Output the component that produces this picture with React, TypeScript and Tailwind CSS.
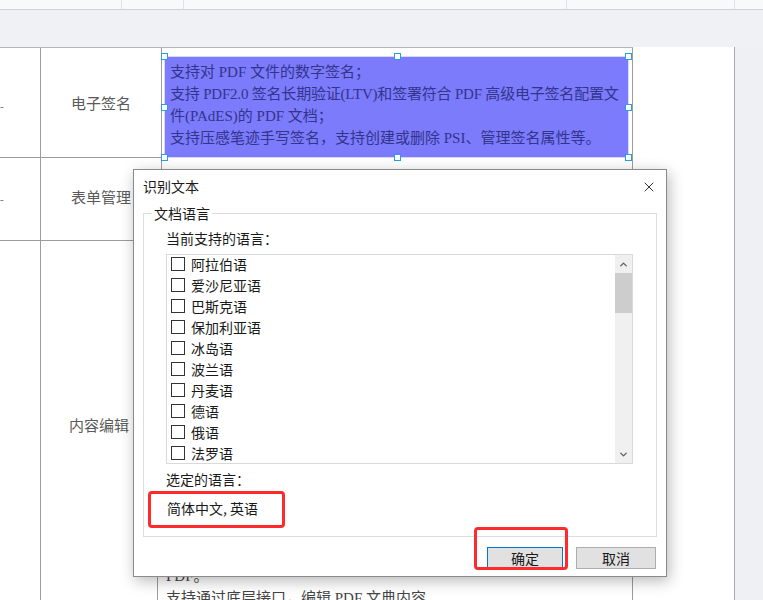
import { X, ChevronUp, ChevronDown } from "lucide-react";

const cjk = "font-['Noto_Sans_CJK_SC','Noto_Sans',sans-serif]";
const doc = "font-['Liberation_Serif','Noto_Sans_CJK_SC',serif]";

const languages = [
  "阿拉伯语",
  "爱沙尼亚语",
  "巴斯克语",
  "保加利亚语",
  "冰岛语",
  "波兰语",
  "丹麦语",
  "德语",
  "俄语",
  "法罗语",
];

const Handle = ({ className }: { className: string }) => (
  <span
    className={`absolute h-[7px] w-[7px] border-[1.5px] border-[#2f9be6] bg-white ${className}`}
  />
);

const Toolbar = () => (
  <div className="flex h-[10px] border-b border-[#cfd1d6] bg-[#f8f9fb]">
    <div className="w-[122px] border-r border-[#e1e2e6]" />
    <div className="w-[62px] border-r border-[#e1e2e6]" />
    <div className="w-[383px] border-r border-[#e1e2e6]" />
    <div className="w-[168px] border-r border-[#e1e2e6]" />
    <div className="flex-1" />
  </div>
);

const SelectedCell = () => (
  <div className="relative ml-[2px] mt-[8px] h-[102px] w-[465px] border border-[#d8d8ff] bg-[#7b7bfb] pl-[5px] pt-[4px] text-[15px] leading-[22px] text-[#34348c]">
    <p className="whitespace-nowrap">支持对 PDF 文件的数字签名；</p>
    <p className="whitespace-nowrap tracking-[-0.2px]">
      支持 PDF2.0 签名长期验证(LTV)和签署符合 PDF 高级电子签名配置文
    </p>
    <p className="whitespace-nowrap">件(PAdES)的 PDF 文档；</p>
    <p className="whitespace-nowrap">支持压感笔迹手写签名，支持创建或删除 PSI、管理签名属性等。</p>
    <Handle className="-left-[4px] -top-[4px]" />
    <Handle className="left-[229px] -top-[4px]" />
    <Handle className="-right-[4px] -top-[4px]" />
    <Handle className="-left-[4px] top-[47px]" />
    <Handle className="-right-[4px] top-[47px]" />
    <Handle className="-bottom-[4px] -left-[4px]" />
    <Handle className="-bottom-[4px] left-[229px]" />
    <Handle className="-bottom-[4px] -right-[4px]" />
  </div>
);

const Page = () => (
  <div className={`flex h-[553px] ${doc}`}>
    <div className="w-[735px] overflow-hidden border-r border-[#a9abb0] bg-white">
      <div className="w-[633px] border-t border-[#b4b4b4]">
        <div className="flex h-[110px] border-b border-[#9c9c9c]">
          <div className="flex w-[41px] items-center border-r border-[#9c9c9c] pt-[8px] text-[#666]">
            <span className="text-[11px]">-</span>
          </div>
          <div className="flex w-[121px] items-center justify-center border-r border-[#9c9c9c] pt-[4px] text-[15px] text-[#5a5a5a]">
            电子签名
          </div>
          <div className="flex-1 border-r border-[#9c9c9c]">
            <SelectedCell />
          </div>
        </div>
        <div className="flex h-[83px] border-b border-[#9c9c9c]">
          <div className="flex w-[41px] items-center border-r border-[#9c9c9c] text-[#666]">
            <span className="text-[11px]">-</span>
          </div>
          <div className="flex w-[121px] items-center justify-center border-r border-[#9c9c9c] pb-[2px] text-[15px] text-[#5a5a5a]">
            表单管理
          </div>
          <div className="flex-1 border-r border-[#9c9c9c]" />
        </div>
        <div className="flex h-[400px]">
          <div className="w-[41px] border-r border-[#9c9c9c]" />
          <div className="w-[117px] border-r border-[#9c9c9c] pt-[174px] text-center text-[15px] leading-[22px] text-[#5a5a5a]">
            内容编辑
          </div>
          <div className="flex-1 border-r border-[#9c9c9c] pl-[8px] pt-[324px] text-[15px] leading-[22px] text-[#444]">
            <p className="whitespace-nowrap">PDF。</p>
            <p className="whitespace-nowrap">支持通过底层接口，编辑 PDF 文典内容</p>
          </div>
        </div>
      </div>
    </div>
    <div className="flex-1 bg-[#eef0f3]" />
  </div>
);

const Dialog = () => (
  <div
    className={`absolute left-[133px] top-[169px] h-[408px] w-[534px] border border-[#8a8a8a] bg-white text-[14px] text-[#1a1a1a] shadow-[2px_4px_14px_rgba(0,0,0,0.28)] ${cjk}`}
  >
    <div className="flex h-[33px] items-center justify-between pl-[9px] pr-[9px]">
      <span className="-mt-[1px] leading-[20px]">识别文本</span>
      <X className="h-[16px] w-[16px] text-[#222]" strokeWidth={1.4} />
    </div>
    <div className="relative mx-[9px] mt-[10px] h-[324px] border border-[#dcdcdc] pl-[22px]">
      <span className="absolute -top-[11px] left-[8px] bg-white px-[2px] leading-[20px]">文档语言</span>
      <div className="pt-[14px] leading-[20px]">当前支持的语言：</div>
      <div className="mt-[6px] flex h-[210px] w-[467px] border border-[#d9d9d9]">
        <div className="-mt-[2px] flex-1">
          {languages.map((lang) => (
            <div key={lang} className="flex h-[21px] items-center pl-[4px]">
              <span className="h-[14px] w-[14px] border border-[#333] bg-white" />
              <span className="ml-[6px] leading-[20px]">{lang}</span>
            </div>
          ))}
        </div>
        <div className="flex w-[17px] flex-col bg-[#f0f0f0]">
          <div className="flex h-[18px] items-center justify-center">
            <ChevronUp className="h-[11px] w-[11px] text-[#606060]" strokeWidth={3} />
          </div>
          <div className="h-[40px] bg-[#cdcdcd]" />
          <div className="flex-1" />
          <div className="flex h-[18px] items-center justify-center">
            <ChevronDown className="h-[11px] w-[11px] text-[#606060]" strokeWidth={3} />
          </div>
        </div>
      </div>
      <div className="mt-[5px] leading-[20px]">选定的语言：</div>
      <div className="-ml-[18px] mt-[2px] flex h-[37px] w-[137px] items-center rounded-[4px] border-[3px] border-[#ff2b2b] pb-[2px] pl-[16px]">
        简体中文, 英语
      </div>
    </div>
    <div className="mt-[10px] flex justify-end gap-[13px] pr-[10px]">
      <button className="flex h-[22px] w-[76px] items-center justify-center border border-[#0078d7] bg-[#e1e1e1] text-[14px]">
        确定
      </button>
      <button className="flex h-[22px] w-[80px] items-center justify-center border border-[#adadad] bg-[#e1e1e1] text-[14px]">
        取消
      </button>
    </div>
    <div className="absolute left-[340px] top-[357px] h-[43px] w-[94px] rounded-[4px] border-[3px] border-[#ff2b2b]" />
  </div>
);

export default function App() {
  return (
    <div className="relative h-[600px] w-[763px] overflow-hidden bg-[#f0f1f4]">
      <Toolbar />
      <div className="h-[37px]" />
      <Page />
      <Dialog />
    </div>
  );
}
